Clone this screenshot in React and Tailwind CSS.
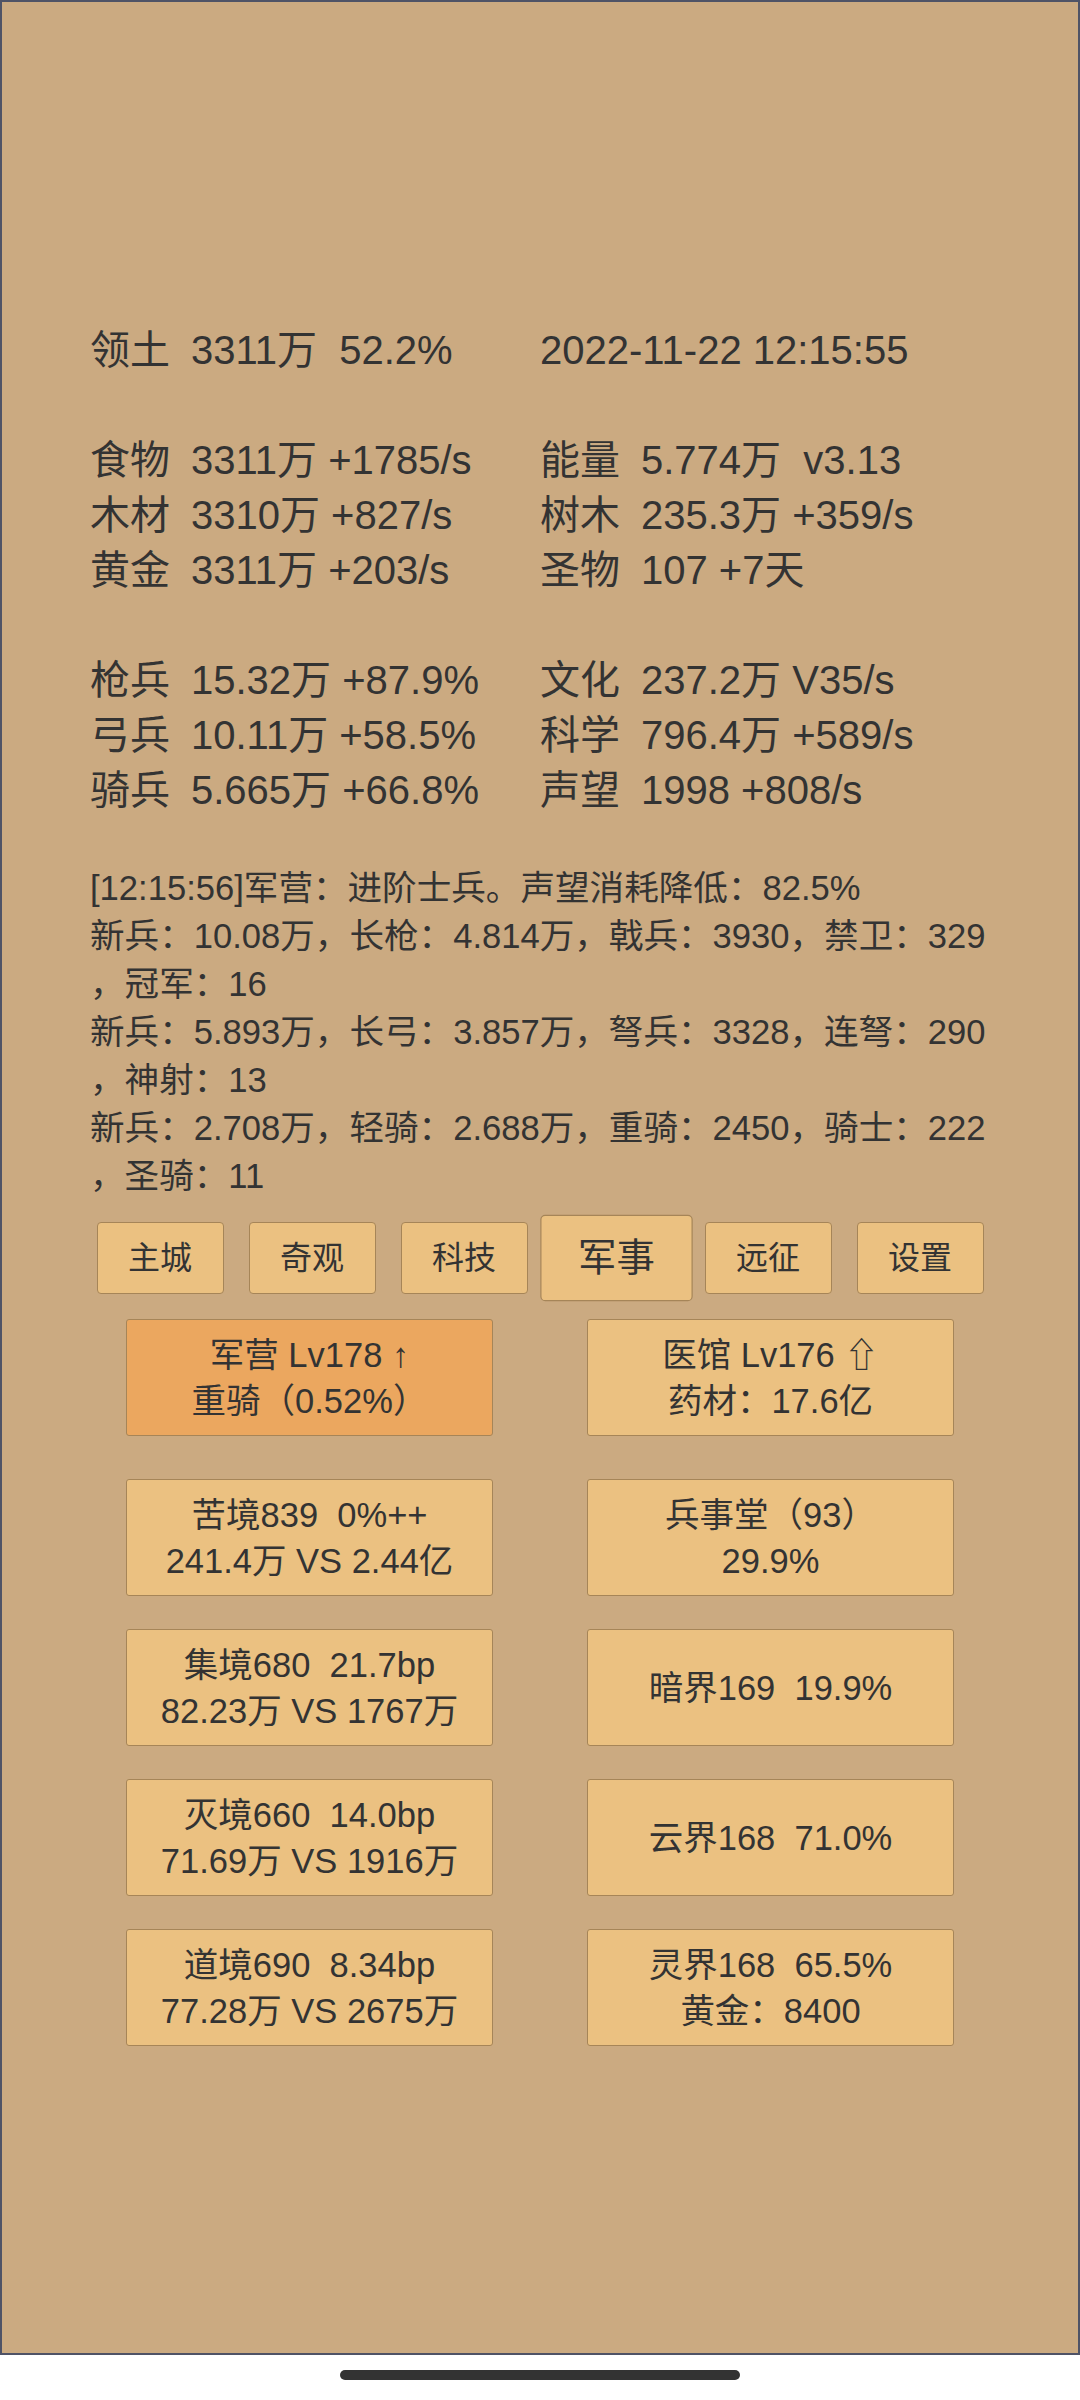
import React from 'react';

const font = { fontFamily: '"Liberation Sans","Noto Sans CJK SC",sans-serif' };

const stats = [
  [['领土', '3311万  52.2%'], [null, '2022-11-22 12:15:55']],
  null,
  [['食物', '3311万 +1785/s'], ['能量', '5.774万  v3.13']],
  [['木材', '3310万 +827/s'], ['树木', '235.3万 +359/s']],
  [['黄金', '3311万 +203/s'], ['圣物', '107 +7天']],
  null,
  [['枪兵', '15.32万 +87.9%'], ['文化', '237.2万 V35/s']],
  [['弓兵', '10.11万 +58.5%'], ['科学', '796.4万 +589/s']],
  [['骑兵', '5.665万 +66.8%'], ['声望', '1998 +808/s']],
];

const log = [
  '[12:15:56]军营：进阶士兵。声望消耗降低：82.5%',
  '新兵：10.08万，长枪：4.814万，戟兵：3930，禁卫：329',
  '，冠军：16',
  '新兵：5.893万，长弓：3.857万，弩兵：3328，连弩：290',
  '，神射：13',
  '新兵：2.708万，轻骑：2.688万，重骑：2450，骑士：222',
  '，圣骑：11',
];

const tabs = ['主城', '奇观', '科技', '军事', '远征', '设置'];

const cards = [
  [['军营 Lv178 ↑', '重骑（0.52%）'], ['医馆 Lv176 ⇧', '药材：17.6亿']],
  [['苦境839  0%++', '241.4万 VS 2.44亿'], ['兵事堂（93）', '29.9%']],
  [['集境680  21.7bp', '82.23万 VS 1767万'], ['暗界169  19.9%']],
  [['灭境660  14.0bp', '71.69万 VS 1916万'], ['云界168  71.0%']],
  [['道境690  8.34bp', '77.28万 VS 2675万'], ['灵界168  65.5%', '黄金：8400']],
];

const StatCell = ({ cell }) => (
  <div className="flex h-[55px] items-center whitespace-pre">
    {cell[0] && <span className="w-[101px] shrink-0">{cell[0]}</span>}
    <span>{cell[1]}</span>
  </div>
);

const Card = ({ lines, active }) => (
  <div
    className={`flex h-[117px] flex-col items-center justify-center rounded-[3px] border border-[#a68558] text-[34.5px] leading-[46px] whitespace-pre ${
      active ? 'bg-[#eba75f]' : 'bg-[#ebc181]'
    }`}
  >
    {lines.map((l, i) => (
      <div key={i}>{l}</div>
    ))}
  </div>
);

export default function App() {
  return (
    <div className="w-[1080px] h-[2400px] bg-white text-[#333]" style={font}>
      <div className="h-[2355px] border-2 border-[#4f5366] bg-[#cbaa81] pt-[320px]">
        {/* stats */}
        <div className="pl-[88px] text-[40px]">
          {stats.map((row, i) =>
            row ? (
              <div key={i} className="grid grid-cols-[450px_450px]">
                <StatCell cell={row[0]} />
                <StatCell cell={row[1]} />
              </div>
            ) : (
              <div key={i} className="h-[55px]" />
            )
          )}
        </div>

        {/* log */}
        <div className="mt-[47px] pl-[88px] text-[34.6px] leading-[48px] whitespace-nowrap">
          {log.map((l, i) => (
            <div key={i}>{l}</div>
          ))}
        </div>

        {/* tabs */}
        <div className="mt-[22px] flex justify-center gap-[25px]">
          {tabs.map((t) => (
            <div
              key={t}
              className={`flex h-[72px] w-[127px] items-center justify-center rounded-[4px] border border-[#a68558] bg-[#ebc181] text-[32px] ${
                t === '军事' ? 'scale-[1.2]' : ''
              }`}
            >
              {t}
            </div>
          ))}
        </div>

        {/* buildings */}
        <div className="mt-[25px] flex flex-col items-center gap-[33px]">
          {cards.map((row, i) => (
            <div key={i} className={`grid grid-cols-[367px_367px] gap-x-[94px] ${i === 0 ? 'mb-[10px]' : ''}`}>
              <Card lines={row[0]} active={i === 0} />
              <Card lines={row[1]} />
            </div>
          ))}
        </div>
      </div>
      <div className="mt-[15px] flex justify-center">
        <div className="h-[10px] w-[400px] rounded-full bg-[#333]" />
      </div>
    </div>
  );
}
